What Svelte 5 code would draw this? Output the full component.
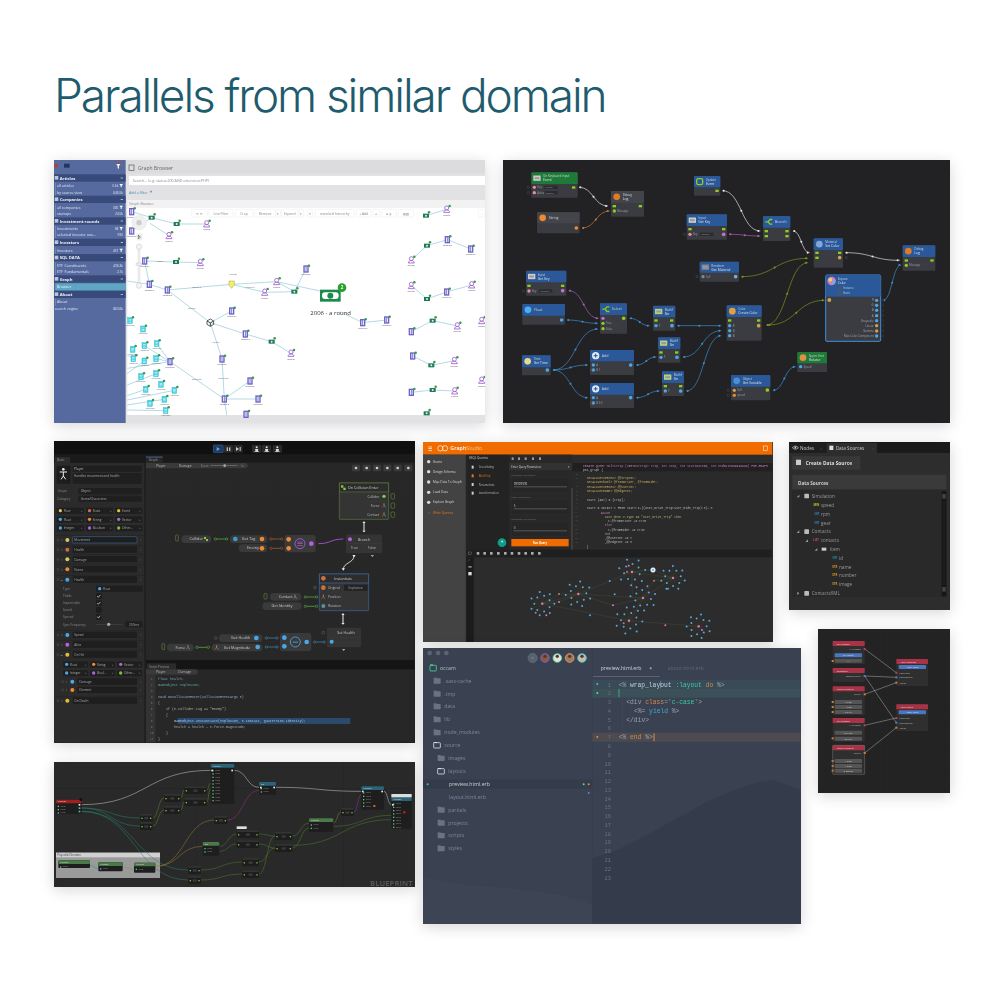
<script>
  // Every panel of the collage is a small drawing, described in units of 1/3 page pixel.
  const panels = [];
  let cur;
  const panel = (ox, oy, x0, y0, x1, y1, bg) => {
    cur = { left: ox + x0 / 3, top: oy + y0 / 3 - 160, w: (x1 - x0) / 3, h: (y1 - y0) / 3, vb: `${x0} ${y0} ${x1 - x0} ${y1 - y0}`, bg, items: [] };
    panels.push(cur);
  };
  const R = (x, y, w, h, f, o = {}) => cur.items.push({ k: 'r', x, y, w, h, f, ...o });
  const T = (x, y, s, size, f, o = {}) => cur.items.push({ k: 't', x, y, s, size, f, a: 'start', cl: 'sans', ...o });
  const C = (x, y, r, f, o = {}) => cur.items.push({ k: 'c', x, y, r, f, ...o });
  const L = (d, st, sw = 2, o = {}) => cur.items.push({ k: 'p', d, st, sw, ...o });
  const F = (d, f, o = {}) => cur.items.push({ k: 'f', d, f, ...o });
  const bez = (a, b, c, d) => { const m = (a + c) / 2; return `M${a} ${b}C${m} ${b} ${m} ${d} ${c} ${d}`; };
  const line = (a, b, c, d) => `M${a} ${b}L${c} ${d}`;

  /* ---------- 1. Graph browser ---------- */
  panel(50, 155, 12, 15, 1305, 805, '#e2e2e4');
  R(12, 15, 1293, 40, '#dcdcde');
  R(12, 15, 215, 790, '#566a9f');
  R(14, 27, 10, 10, '#c0392b', { rx: 2 });
  R(42, 26, 17, 12, '#27355e');
  F('M196 24h18l-7 9v9l-4-3v-6z', '#f1f1f1');
  R(196, 24, 18, 3, '#c0392b');
  R(237, 30, 15, 17, 'none', { st: '#555', sw: 2 });
  T(264, 44, 'Graph Browser', 15, '#666');
  R(237, 63, 1068, 27, '#fff');
  T(248, 81, 'Search... (e.g. status:200 AND extension:PHP)', 11, '#8a8a8a');
  T(237, 116, 'Add a filter', 11, '#4a8db3');
  T(299, 116, '+', 13, '#2a7fb0', { w: 700 });
  [
    ['Articles', 58], ['Companies', 122], ['Investment rounds', 187], ['Investors', 251],
    ['SQL DATA', 297], ['Graph', 361], ['About', 407]
  ].forEach(([s, y]) => {
    R(12, y, 215, 22, '#384a7a');
    R(14, y + 5, 11, 11, '#b9c3dc');
    T(29, y + 16, s, 12.5, '#eef1f8', { w: 700 });
    R(212, y + 10, 7, 2, '#eee');
  });
  [
    ['all articles', '5.6k', 92, 1], ['by source view', '646.5k', 112], ['all companies', '330', 157, 1], ['startups', '24.5k', 175],
    ['Investments', '38', 221, 1], ['selected investor ana...', '590', 240], ['Investors', '457', 286, 1],
    ['ETF_Constituents', '436.3k', 331], ['ETF_Fundamentals', '2.1k', 350], ['About', '', 441], ['search engine', '863.6k', 462]
  ].forEach(([s, n, y, fl]) => {
    T(y === 462 ? 14 : 21, y + 4, s, 11, '#dfe5f3');
    T(fl ? 205 : 219, y + 4, n, 9.5, '#dfe5f3', { a: 'end' });
    if (fl) F(`M208 ${y - 5}h11l-4 5v5h-3v-5z`, '#fff');
    if (y !== 462) R(16, y - 9, 1.5, 19, '#8c9cc7');
  });
  R(16, 385, 211, 21, '#5ea6c4');
  T(21, 400, 'Browser', 11, '#e9f4f9');
  R(232, 135, 1073, 23, '#f2f2f3');
  T(238, 149, 'Graph Browser', 10.5, '#888');
  R(232, 158, 1073, 622, '#fff');
  const dBuild = [[245,170],[245,228],[284,318],[298,388],[352,405],[768,342],[545,468],[586,537],[516,612],[360,620],[523,732],[600,678],[624,732],[938,503],[1010,495],[1192,254],[1262,282],[1190,411],[1084,530],[1088,603],[1084,712],[588,778]];
  const dPers = [[470,207],[357,242],[451,323],[680,380],[644,412],[723,595],[1084,315],[1084,392],[1265,390],[1222,513],[1213,617],[1214,708],[1295,497],[1295,676],[1190,163]];
  const dMoney = [[305,188],[380,207],[378,321],[733,410],[665,560],[1131,272],[1131,432],[1148,497],[1144,631],[1148,705],[1128,182],[1130,775]];
  const dDoc = [[240,497],[279,522],[320,566],[283,572],[248,583],[250,611],[283,618],[318,611],[273,665],[318,656],[287,703],[333,688],[373,706],[343,733],[300,745],[347,767]];
  [
    [232,378,298,388],[284,318,298,388],[284,318,378,321],[378,321,451,323],[352,405,545,388],[298,388,352,405],[545,388,680,380],[545,388,644,412],[644,412,733,410],[680,380,810,408],[768,342,733,410],[733,410,680,380],[352,405,481,503],[481,503,545,468],[481,503,586,537],[586,537,665,560],[665,560,723,595],[481,503,516,612],[516,612,523,732],[360,620,523,732],[523,732,600,678],[523,732,624,732],[523,732,530,780],[938,503,1010,495],[870,470,938,503],[245,170,305,188],[245,228,305,188],[305,188,380,207],[380,207,470,207],[357,242,300,205],[1084,315,1131,272],[1131,272,1192,254],[1192,254,1262,282],[1084,392,1131,432],[1131,432,1190,411],[1190,411,1265,390],[1084,530,1148,497],[1148,497,1222,513],[1088,603,1144,631],[1144,631,1213,617],[1084,712,1148,705],[1148,705,1214,708],[1128,182,1190,163],
    [232,640,360,620],[232,655,283,618],[232,600,250,611],[232,690,318,656],[232,722,287,703],[232,735,373,706],[232,750,343,733],[232,765,347,767],[283,572,360,620],[320,566,360,620],[318,611,360,620]
  ].forEach(([a, b, c, d]) => L(line(a, b, c, d), '#74b9d0', 1.6));
  const badge = (x, y) => C(x + 9, y - 10, 3.8, '#3a9a4a');
  dBuild.forEach(([x, y]) => { R(x - 8, y - 11, 16, 22, '#6f64c8'); R(x - 4, y - 7, 3, 14, '#e6e3f8'); R(x + 1, y - 7, 3, 14, '#e6e3f8'); badge(x, y); });
  dPers.forEach(([x, y]) => { C(x, y - 4, 6, '#fff', { st: '#a05fd0', sw: 2.6 }); L(`M${x - 9} ${y + 9}c1-10 17-10 18 0z`, '#a05fd0', 2.6); badge(x, y); });
  dMoney.forEach(([x, y]) => { R(x - 9, y - 6, 18, 12, '#1d7a58'); C(x, y, 3, '#e4f3ec'); badge(x, y); });
  dDoc.forEach(([x, y]) => { R(x - 7, y - 9, 14, 18, '#48cfdf', { st: '#35c4d6', sw: 1.5 }); R(x - 4, y - 4, 8, 1.5, '#fff'); R(x - 4, y, 8, 1.5, '#fff'); R(x - 4, y + 4, 8, 1.5, '#fff'); badge(x, y); });
  dBuild.slice(0, 18).forEach(([x, y]) => T(x, y + 19, 'Corporate', 6, '#555', { a: 'middle' }));
  dPers.forEach(([x, y]) => T(x, y + 19, 'Investor', 6, '#555', { a: 'middle' }));
  dDoc.forEach(([x, y]) => T(x, y + 16, 'Article title', 5.5, '#555', { a: 'middle' }));
  [[440,398,'located in'],[600,398,'funded by'],[425,462,'category'],[498,565,'partner'],[520,672,'acquisition'],[440,674,'acquisition'],[330,320,'invests'],[550,360,'investor']].forEach(([x, y, s]) => T(x, y, s, 6, '#666', { a: 'middle' }));
  F('M537 378h16v12l-8 10-8-10z', '#f5ee70');
  L('M537 378h16v12l-8 10-8-10z', '#a5a520', 1.5);
  L('M471 498l10-6 10 6v10l-10 6-10-6zM471 498l10 6 10-6M481 504v10', '#222', 2.2);
  R(810, 404, 62, 36, '#1c8a4c'); R(816, 412, 50, 20, '#fff', { rx: 9 }); C(841, 422, 9, '#1c8a4c');
  C(876, 398, 13, '#2f9e32'); T(876, 403, '2', 13, '#fff', { a: 'middle', w: 700 });
  T(842, 479, '2006 - a round', 18, '#333', { a: 'middle' });
  [[425,47,'⟲ ⟳'],[477,72,'Live Filter'],[556,52,'Crop'],[614,62,'Remove'],[678,14,'▾'],[695,48,'Expand'],[747,14,'▾'],[772,16,'≡'],[795,118,'standard  hierarchy'],[919,44,'+ Add'],[969,20,'◂'],[995,44,'● ◎'],[1045,46,'▤ ▧'],[1285,20,'→']].forEach(([x, w, s]) => {
    R(x, 163, w, 23, '#fff', { st: '#e0e0e0', sw: 1, rx: 3 });
    T(x + w / 2, 179, s, 10, '#888', { a: 'middle' });
  });
  C(267, 203, 22, '#f0f0f0', { st: '#ddd', sw: 1 }); C(267, 203, 8, '#ccc');
  R(260, 236, 17, 20, '#eee'); L('M265 240v11l6-4z', '#222', 1.5);
  R(264, 278, 6, 105, '#f0f0f0', { st: '#ccc', sw: 1 });
  C(267, 275, 8, '#f4f4f4', { st: '#aaa', sw: 1 }); C(267, 392, 8, '#f4f4f4', { st: '#aaa', sw: 1 });
  R(258, 324, 18, 7, '#eee', { st: '#bbb', sw: 1 });

  /* ---------- 2. Visual scripting, blue nodes ---------- */
  panel(500, 155, 10, 15, 1350, 805, '#222224');
  const hBlue = '#2a5898', hGreen = '#1f7a38', hGray = '#43454a';
  const wires = [
    ['#e8e8e8',238,97,325,153],['#c97b3d',247,219,330,168],['#e8e8e8',668,107,782,228],['#b060b8',688,238,782,243],['#e8e8e8',880,228,930,293],
    ['#7c9a20',725,365,925,310],['#7c9a20',800,510,925,323],['#7c9a20',805,510,975,436],['#e8e8e8',1037,293,1200,316],['#3f8fcf',1150,436,1205,330],
    ['#b060b8',207,407,297,490],['#3f8fcf',202,495,295,505],['#3f8fcf',160,645,295,522],['#3f8fcf',390,490,450,512],['#3f8fcf',533,512,665,512],
    ['#3f8fcf',160,645,265,630],['#3f8fcf',160,645,265,728],['#3f8fcf',410,630,470,606],['#3f8fcf',410,728,480,708],['#3f8fcf',550,606,665,527],
    ['#3f8fcf',560,708,665,542],['#3f8fcf',820,706,888,635]
  ];
  wires.forEach(([s, a, b, c, d]) => {
    L(bez(a, b, c, d), s, 2);
    C((a + c) / 2, (b + d) / 2, 3, s); C(a + 4, b, 3, s); C(c - 6, d, 3, s);
  });
  [
    [95,52,139,76,35,hGreen,'On Keyboard Input','Event','#ccc','k'],[334,108,99,77,35,hGray,'Debug','Log','#e07b20','c'],[112,172,128,63,33,hGray,'String','','#f08a30','c'],
    [583,63,79,59,34,hBlue,'Update','Event','#8ecc20','l'],[561,178,121,76,35,hBlue,'Input','Get Key','#ccc','k'],[790,183,82,75,35,hBlue,'Branch','','#8ecc20','b'],
    [942,250,88,88,35,hBlue,'Material','Set Color','#7fa8d8','c'],[1209,271,98,76,35,hBlue,'Debug','Log','#e07b20','c'],[600,320,118,60,33,hBlue,'Renderer','Get Material','#888','k'],
    [79,347,121,75,35,hBlue,'Input','Get Key','#ccc','k'],[68,447,128,62,35,hBlue,'Float','','#4ab0f0','c'],[301,445,81,91,35,hBlue,'Select','','#8ecc20','b'],
    [460,452,67,75,35,hBlue,'Mathf','Sin','#b8d080','k'],[681,451,105,106,35,hBlue,'Color','Create Color','#e0a040','c'],[475,547,67,76,35,hBlue,'Mathf','Sin','#b8d080','k'],
    [271,585,132,75,34,hBlue,'Add','','#bde','p'],[67,601,86,60,36,hBlue,'Time','Get Time','#e8d890','c'],[271,684,132,75,35,hBlue,'Add','','#bde','p'],
    [487,649,66,74,35,hBlue,'Mathf','Sin','#b8d080','k'],[694,660,118,76,35,hBlue,'Object','Get Variable','#4a90d0','c'],[893,591,89,60,34,hGreen,'Super Unit','Rotator','#e09040','c']
  ].forEach(([x, y, w, h, hh, col, t1, t2, ic, kind]) => {
    R(x, y, w, h, '#3a3c41', { rx: 3 });
    R(x, y, w, hh, col, { rx: 3 });
    const cy = y + hh / 2, cx = x + 17;
    if (kind === 'k') { R(cx - 11, cy - 8, 22, 16, ic); R(cx - 7, cy - 3, 14, 6, '#999'); }
    else if (kind === 'l') { R(cx - 9, cy - 9, 18, 18, 'none', { st: ic, sw: 4, rx: 5 }); }
    else if (kind === 'b') { L(`M${cx - 10} ${cy}h8M${cx - 2} ${cy}l6-7h7M${cx - 2} ${cy}l6 7h7`, ic, 4); }
    else if (kind === 'p') { C(cx, cy, 11, '#dfeaf8'); R(cx - 6, cy - 1.5, 12, 3, col); R(cx - 1.5, cy - 6, 3, 12, col); }
    else C(cx, cy, 10, ic);
    T(x + 35, t2 ? y + 15 : y + 21, t1, t2 ? 9 : 11, '#c8d4e4');
    if (t2) T(x + 35, y + 27, t2, 10, '#d8e2ee');
  });
  R(978, 360, 165, 199, '#3a3c41', { rx: 4, st: '#3f8fe0', sw: 3 });
  R(978, 360, 165, 65, hBlue, { rx: 4 });
  C(996, 378, 13, '#d07ac8'); C(992, 374, 6, '#f0d060'); C(1001, 382, 5, '#50c0e0');
  T(1014, 374, 'Expose', 9, '#c8d4e4'); T(1014, 387, 'Color', 10, '#d8e2ee');
  T(1030, 402, 'Instance', 8.5, '#b8c4d4'); T(1030, 418, 'Static', 8.5, '#b8c4d4');
  R(1016, 395, 9, 9, '#555'); R(1016, 411, 9, 9, '#555');
  [['R',436],['G',451],['B',466],['A',482],['Grayscale',497],['Linear',512],['Gamma',528],['Max Color Component',543]].forEach(([s, y], i) => {
    T(1122, y + 3, s, 8.5, '#a0a4aa', { a: 'end' });
    C(1131, y, 5, i === 5 || i === 6 ? '#d0a050' : '#4aa8e8');
    C(1149, y, 3.5, '#222', { st: '#555', sw: 1 });
  });
  C(989, 435, 6, '#d0a050');
  [[104,97,'#e88aa0','Key','"Right"'],[104,113,'#e88aa0','Action','"Down"'],[571,238,'#e88aa0','Key','"Space"'],[88,408,'#e88aa0','Key','"Cancel"'],[310,490,'#c070d0','',''],[310,505,'#8ecc20','True',''],[310,521,'#8ecc20','False',''],[344,168,'#8ecc20','Message',''],[1220,331,'#8ecc20','Message',''],[469,512,'#4aa8e8','F',''],[484,607,'#4aa8e8','F',''],[497,708,'#4aa8e8','F',''],[690,512,'#4aa8e8','R',''],[690,527,'#4aa8e8','G',''],[690,542,'#4aa8e8','B',''],[281,630,'#4aa8e8','A',''],[281,645,'#4aa8e8','B  1',''],[281,728,'#4aa8e8','A',''],[281,744,'#4aa8e8','B  0.5',''],[704,706,'#d0a050','Self',''],[704,721,'#f08a30','speed',''],[903,635,'#4aa8e8','Speed',''],[610,365,'#888','Self','']].forEach(([x, y, c, s, v]) => {
    C(x, y, 5, c);
    if (s) T(x + 9, y + 3, s, 8, '#a0a4aa');
    if (v) { R(x + 30, y - 5, 40, 10, '#2a2b2e'); T(x + 33, y + 3, v, 7.5, '#999'); }
  });
  [[186,495,'#4aa8e8'],[372,490,'#8ecc20'],[230,219,'#f08a30'],[143,645,'#4aa8e8'],[393,630,'#4aa8e8'],[393,728,'#4aa8e8'],[517,512,'#4aa8e8'],[532,607,'#4aa8e8'],[543,708,'#4aa8e8'],[777,512,'#d0a050'],[672,238,'#c070d0'],[189,407,'#c070d0'],[708,365,'#7fa8d8'],[803,705,'#8ecc20'],[1020,308,'#d0a050']].forEach(([x, y, c]) => C(x, y, 5.5, c));
  [[222,97],[422,153],[652,107],[672,222],[862,228],[862,243],[1020,293],[1297,316],[189,392],[516,496],[531,592],[543,693],[777,496],[344,153],[571,222],[88,392],[469,496],[484,592],[497,693],[690,496],[800,228],[800,243],[952,293],[952,308],[1220,316]].forEach(([x, y]) => R(x - 5, y - 3, 10, 7, '#8ecc20'));
  [[86,97],[86,113],[554,238],[71,408],[275,645],[275,744],[686,706],[686,721],[592,365],[1040,308]].forEach(([x, y]) => C(x, y, 3.5, 'none', { st: '#666', sw: 1 }));

  /* ---------- 3. Player graph ---------- */
  panel(50, 438, 12, 10, 1095, 915, '#1f1f1f');
  R(12, 10, 1083, 40, '#101010');
  R(490, 22, 30, 23, '#1f3a5e', { st: '#3a6fa8', sw: 1.5, rx: 3 }); F('M500 28l10 6-10 6z', '#5aa8e8');
  R(522, 22, 27, 23, '#2a2a2a', { rx: 3 }); R(530, 29, 4, 11, '#bbb'); R(537, 29, 4, 11, '#bbb');
  R(551, 22, 27, 23, '#2a2a2a', { rx: 3 }); F('M558 28l9 6-9 6z', '#ccc'); R(569, 28, 3, 12, '#ccc');
  [620, 650, 682].forEach((x) => { R(x - 14, 22, 28, 23, '#2a2a2a', { rx: 3 }); C(x, 29, 3, '#ddd'); F(`M${x - 5} 34h10l-2 8h-6z`, '#ddd'); R(x - 7, 41, 14, 2, '#ddd'); });
  R(12, 50, 1083, 25, '#1a1a1a');
  R(15, 58, 45, 18, '#2c2c2c'); T(22, 71, 'Basic', 9, '#999');
  R(12, 76, 271, 839, '#2b2b2b');
  R(20, 84, 42, 54, '#1d1d1d', { rx: 3 });
  C(40, 95, 4, '#eee'); L('M29 103h22M40 103v12M40 115l-7 10M40 115l7 10', '#eee', 3);
  R(68, 84, 207, 18, '#1f1f1f', { rx: 3 }); T(72, 97, 'Player', 10, '#bbb');
  R(68, 106, 207, 32, '#1f1f1f', { rx: 3 }); T(72, 119, 'Handles movement and health', 9.5, '#aaa');
  T(24, 164, 'Scope', 9.5, '#888'); R(85, 151, 190, 19, '#1f1f1f', { rx: 3 }); T(92, 164, 'Object', 10, '#aaa');
  T(22, 186, 'Category', 9.5, '#888'); R(85, 174, 190, 18, '#1f1f1f', { rx: 3 }); T(92, 186, 'Game/Characters', 9.5, '#aaa');
  const chip = (x, y, w, s, c) => { R(x, y, w, 21, '#1f1f1f', { rx: 4, st: '#3a3a3a', sw: 1 }); C(x + 12, y + 10, 5, c); T(x + 22, y + 14, s, 9.5, '#aaa'); T(x + w - 8, y + 14, '+', 9.5, '#888', { a: 'middle' }); };
  [['Flow','#d8c860'],['State','#c87040'],['Event','#e0c030'],['Float','#4aa8e8'],['String','#f08a30'],['Vector','#a870c0'],['Integer','#4aa8e8'],['Boolean','#b060e0'],['Other...','#80c030']].forEach(([s, c], i) =>
    chip(19 + (i % 3) * 87.5, 209 + Math.floor(i / 3) * 26, 84, s, c));
  [
    [307,'Movement','#d8c860',1],[336,'Health','#c87040'],[365,'Damage','#d8c860'],[395,'Name','#f08a30'],[426,'Health','#4aa8e8'],[592,'Speed','#4aa8e8'],[621,'Alive','#b060e0'],[651,'On Hit','#e0c030'],[789,'On Death','#e0c030']
  ].forEach(([y, s, c, on], i) => {
    R(12, y - 14, 271, 0.8, '#1c1c1c');
    R(20, y - 4, 8, 8, '#3a3a3a');
    T(36, y + 4, i === 4 || i === 7 ? '⌄' : '›', 11, '#bbb', { a: 'middle' });
    C(52, y, 6, c);
    R(68, y - 10, 193, 19, '#1e1e1e', { rx: 3, st: on ? '#3f7ab0' : 'none', sw: 1.5 });
    T(73, y + 4, s, 9.5, '#aaa');
    T(271, y + 4, '×', 10, '#555', { a: 'middle' });
  });
  [['Type',453],['Public',475],['Inspectable',496],['Saved',516],['Synced',537]].forEach(([s, y], i) => {
    T(39, y + 3, s, 9.5, '#888');
    if (i === 0) { R(138, y - 9, 140, 18, '#1f1f1f', { rx: 3 }); C(149, y, 5, '#4aa8e8'); T(159, y + 4, 'Float', 9.5, '#aaa'); }
    else { R(138, y - 8, 17, 17, '#1d1d1d', { rx: 3 }); if (i !== 3) L(`M142 ${y}l3 4 6-7`, '#eee', 2); }
  });
  T(39, 564, 'Sync Frequency', 9.5, '#888');
  R(138, 559, 80, 2, '#444'); C(176, 560, 5, '#aaa');
  R(226, 551, 52, 18, '#1f1f1f', { rx: 3 }); T(252, 564, '250ms', 9.5, '#aaa', { a: 'middle' });
  [['Float','#4aa8e8',680,38],['String','#f08a30',680,119],['Vector','#a870c0',680,200],['Integer','#4aa8e8',706,38],['Bool...','#b060e0',706,119],['Other...','#80c030',706,200]].forEach(([s, c, y, x]) => chip(x, y - 10, 77, s, c));
  [[732,'Damage','#4aa8e8'],[757,'Element','#f08a30']].forEach(([y, s, c]) => {
    R(34, y - 4, 8, 8, '#3a3a3a'); T(50, y + 4, '›', 11, '#bbb', { a: 'middle' }); C(67, y, 6, c);
    R(82, y - 10, 179, 19, '#1e1e1e', { rx: 3 }); T(88, y + 4, s, 9.5, '#aaa'); T(271, y + 4, '×', 10, '#555', { a: 'middle' });
  });
  R(288, 75, 805, 593, '#272727');
  for (let x = 300; x < 1093; x += 30) R(x, 92, 1, 576, '#2c2c2c');
  for (let y = 100; y < 668; y += 30) R(288, y, 805, 1, '#2c2c2c');
  R(288, 58, 50, 18, '#272727'); R(288, 57, 50, 2, '#4a8ed0'); T(297, 71, 'Graph', 9, '#999');
  F('M288 76h300l7 8-7 8H288z', '#3a3a3a');
  T(318, 88, 'Player', 10, '#bbb'); T(386, 88, 'Damage', 10, '#bbb');
  T(452, 88, 'Zoom', 8.5, '#888'); R(482, 83, 80, 2, '#777'); C(524, 84, 4, '#aaa'); T(572, 88, '1x', 8.5, '#888');
  [918, 950, 981, 1012, 1043, 1075].forEach((x) => { R(x - 12, 81, 24, 20, '#3a3a3a', { rx: 3 }); C(x, 91, 4, '#ccc'); });
  // code graph
  const pin = (x, y, c) => C(x, y, 6, c);
  const axes = (x, y) => { L(`M${x} ${y}v-7`, '#e0c030', 2); L(`M${x} ${y}l-6 5`, '#e05040', 2); L(`M${x} ${y}l6 5`, '#4aa8e8', 2); };
  const link = (a, b, c, col = '#5ec040') => { L(`M${a} ${b}H${c}`, col, 2); C(a + 4, b, 3.5, '#272727', { st: col, sw: 1.5 }); C(c - 4, b, 3.5, '#272727', { st: col, sw: 1.5 }); };
  const pill = (x, y, w, h, s, a = 'middle') => { R(x, y, w, h, '#3a3a3a', { rx: h / 2 }); T(x + w / 2, y + h / 2 + 4, s, 11.5, '#ccc', { a }); };
  const box = (x, y, w, h, st) => { R(x, y, w, h, '#343434', { st, sw: 2, rx: 2 }); };
  box(868, 136, 148, 109, '#5a7a3a'); R(868, 136, 148, 27, '#2c2c2c', { st: '#5a7a3a', sw: 2 });
  T(894, 153, 'On Collision Enter', 11, '#ccc');
  R(873, 143, 7, 7, '#90c840'); R(880, 150, 7, 7, '#90c840');
  [['Collider',176,'#90c840'],['Force',204,'#c87040'],['Contact',231,'#c87040']].forEach(([s, y, c], i) => {
    R(868, y - 13, 148, 1, '#3d3d3d'); T(988, y + 4, s, 10, '#bbb', { a: 'end' });
    if (i) axes(1002, y); else C(1002, y, 5, c);
    R(1023, y - 8, 11, 16, 'none', { st: '#6fa040', sw: 1.5, rx: 3 });
  });
  L('M942 253v28', '#eee', 3); F('M937 256l5-5 5 5zM937 279l5 5 5-5z', '#eee');
  R(377, 292, 8, 18, 'none', { st: '#6fa040', sw: 1.5, rx: 2 });
  pill(394, 293, 90, 23, 'Collider'); R(462, 298, 6, 6, '#90c840'); R(468, 304, 6, 6, '#90c840');
  link(492, 304, 534);
  pill(540, 293, 112, 23, 'Get Tag'); C(556, 304, 7, '#3a9ad0'); C(636, 304, 7, '#f08a30');
  pill(566, 320, 86, 23, 'Enemy'); C(636, 332, 7, '#f08a30');
  link(659, 304, 699, '#a86a3a'); link(659, 332, 699, '#a86a3a');
  R(703, 292, 94, 52, '#3a3a3a', { rx: 8 });
  C(716, 305, 7, '#f08a30'); C(716, 332, 7, '#f08a30');
  C(750, 318, 15, 'none', { st: '#b060e0', sw: 2.5 }); R(742, 312, 16, 2, '#b060e0'); R(742, 317, 16, 2, '#b060e0'); R(742, 322, 16, 2, '#b060e0');
  C(784, 318, 7, '#b060e0');
  L(bez(805, 318, 880, 304), '#9a50c0', 3);
  box(889, 292, 106, 53, '#3a3a3a'); pin(900, 305, '#b060e0'); T(942, 309, 'Branch', 11, '#ccc', { a: 'middle' });
  R(889, 318, 106, 1, '#444'); R(940, 318, 1, 27, '#444');
  T(913, 335, 'True', 10, '#bbb', { a: 'middle' }); T(966, 335, 'False', 10, '#bbb', { a: 'middle' });
  F('M962 352l5 6 5-6z', '#aaa');
  L('M912 355C912 375 880 375 880 395', '#eee', 2.5); F('M907 352h10l-5 7zM875 392h10l-5 7z', '#eee');
  box(808, 409, 148, 110, '#3a6ba0');
  R(808, 409, 148, 27, '#2c2c2c', { st: '#3a6ba0', sw: 2 });
  C(820, 422, 7, '#d07040'); T(880, 426, 'Instantiate', 11, '#ccc', { a: 'middle' });
  C(820, 450, 7, '#d07040'); T(834, 454, 'Original', 10, '#bbb'); R(882, 441, 70, 18, '#222', { rx: 2 }); T(917, 454, 'Explosion', 9.5, '#aaa', { a: 'middle' });
  axes(820, 478); T(834, 482, 'Position', 10, '#bbb');
  C(820, 505, 6, '#5a90a0'); T(834, 509, 'Rotation', 10, '#bbb');
  C(795, 450, 4, 'none', { st: '#888', sw: 1 });
  pill(660, 466, 94, 23, 'Contact'); axes(735, 478); pill(637, 494, 118, 23, 'Get Identity');
  R(642, 468, 9, 16, 'none', { st: '#6fa040', sw: 1.5, rx: 2 });
  link(762, 478, 804); link(762, 506, 804);
  L('M879 528v30', '#eee', 3); F('M874 532l5-5 5 5zM874 556l5 5 5-5z', '#eee');
  box(832, 572, 100, 55, '#3a3a3a'); T(888, 589, 'Set Health', 11, '#ccc', { a: 'middle' }); R(832, 598, 100, 1, '#444'); pin(845, 612, '#4aa8e8'); F('M876 634l5 6 5-6z', '#aaa');
  C(820, 585, 4, 'none', { st: '#888', sw: 1 }); C(497, 601, 4, 'none', { st: '#888', sw: 1 });
  pill(507, 590, 130, 23, 'Get Health'); C(619, 601, 7, '#4aa8e8');
  pill(485, 618, 152, 23, 'Get Magnitude'); C(623, 628, 7, '#4aa8e8'); axes(500, 630);
  pill(351, 618, 80, 23, 'Force'); axes(414, 630);
  R(336, 618, 8, 18, 'none', { st: '#6fa040', sw: 1.5, rx: 2 });
  link(437, 629, 479); link(645, 601, 685, '#4a90c0'); link(645, 628, 685, '#4a90c0'); link(790, 613, 826, '#4a90c0');
  R(690, 586, 94, 54, '#3a3a3a', { rx: 8 }); C(703, 600, 7, '#4aa8e8'); C(703, 626, 7, '#4aa8e8');
  C(736, 613, 15, 'none', { st: '#4aa8e8', sw: 2.5 }); R(728, 612, 16, 2.5, '#4aa8e8'); C(770, 613, 7, '#4aa8e8');
  // script preview
  R(288, 668, 805, 30, '#151515');
  R(290, 677, 88, 18, '#2b2b2b'); T(298, 691, 'Script Preview', 9, '#999');
  R(288, 695, 805, 220, '#272727');
  F('M288 695h150l7 8-7 8H288z', '#3a3a3a'); T(318, 707, 'Player', 10, '#bbb'); T(385, 707, 'Damage', 10, '#bbb');
  R(288, 711, 28, 204, '#333');
  const codeL = [['float health;','#7c9ad0',724],['GameObject explosion;','#5ab0a0',742],['void OnCollisionEnter(CollisionEventArgs e)','#9ab0c8',778],['{','#aaa',796],['    if (e.collider.tag == "Enemy")','#a8b8a8',814],['    {','#aaa',832],['        GameObject.Instantiate(explosion, e.contact, Quaternion.identity);','#a8c8e0',850],['        health = health - e.force.magnitude;','#aaa',868],['    }','#aaa',886],['}','#aaa',904]];
  R(383, 841, 518, 18, '#2b4a6c');
  codeL.forEach(([s, c, y]) => T(324, y + 3, s, 10, c, { cl: 'mono', sp: 'preserve' }));
  [724, 742, 760, 778, 796, 814, 832, 850, 868, 886, 904].forEach((y, i) => T(305, y + 3, String(i + 1), 9, '#777', { a: 'middle', cl: 'mono' }));

  /* ---------- 4. GraphStudio ---------- */
  panel(420, 438, 10, 12, 1058, 612, '#2c2c2c');
  R(10, 12, 1048, 38, '#f06c00');
  R(26, 26, 11, 2, '#fff'); R(26, 31, 11, 2, '#fff'); R(26, 36, 11, 2, '#fff');
  C(62, 31, 8, 'none', { st: '#fff', sw: 2 }); C(76, 31, 8, 'none', { st: '#fff', sw: 2 });
  T(92, 36, 'Graph', 16, '#fff', { w: 600 }); T(140, 36, 'Studio', 16, '#f9c48c');
  R(1031, 24, 12, 13, 'none', { st: '#fff', sw: 1.5 });
  R(10, 50, 128, 562, '#434343');
  [['Home',71],['Design Schema',101],['Map Data To Graph',132],['Load Data',163],['Explore Graph',193]].forEach(([s, y]) => { T(40, y + 3, s, 9.5, '#d8d8d8'); C(27, y, 5, '#ddd'); });
  T(40, 227, 'Write Queries', 9.5, '#e8741a'); T(27, 227, '‹›', 9.5, '#e8741a', { a: 'middle' });
  R(140, 50, 128, 285, '#232323');
  T(147, 64, 'GSQL Queries', 9, '#ccc');
  [['Crosslisting',88],['MultiTrip',114],['Parametrize',140],['transformation',166]].forEach(([s, y], i) => { T(177, y + 3, s, 8.5, i === 1 ? '#e8741a' : '#bbb'); R(156, y - 5, 6, 9, i === 1 ? '#e8741a' : '#ccc'); });
  C(247, 314, 13, '#0f9d8a'); T(247, 319, '+', 14, '#fff', { a: 'middle' });
  R(268, 50, 190, 285, '#282828');
  [279, 298, 318, 340, 361].forEach((x) => R(x - 3, 58, 6, 8, '#999'));
  R(268, 75, 190, 22, '#323232'); T(275, 90, 'Enter Query Parameters', 8, '#ddd'); T(447, 90, '×', 9, '#ddd', { a: 'middle' });
  [['endDate: int number','99999999',110],['step: int number','5',176],['startDate: int number','0',242]].forEach(([s, v, y]) => {
    T(275, y + 3, s, 7.5, '#777');
    R(276, y + 8, 172, 46, '#262626', { st: '#333', sw: 1 });
    T(282, y + 31, v, 9, '#ccc');
    R(282, y + 36, 160, 1.5, '#888');
  });
  R(456, 150, 4, 185, '#666');
  R(275, 303, 172, 22, '#f06c00'); T(361, 318, 'Run Query', 8, '#fff', { a: 'middle', w: 700 });
  R(458, 75, 600, 260, '#2a2a2a');
  R(458, 75, 600, 25, '#202020');
  [
    ['CREATE QUERY MultiTrip (VERTEX<Trip> trip, int step, int startDate=0, int endDate=99999999) FOR GRAPH',85,'#c77dba',490],
    ['pos_graph {',96,'#bbb',490],['SetAccum<VERTEX> @@tripSet;',120,'#c8b060',501],['SetAccum<bool> @fromDriver, @fromRider;',133,'#c8b060',501],['SetAccum<VERTEX> @@userSet;',146,'#c8b060',501],['SetAccum<EDGE> @@edgeSet;',159,'#c8b060',501],
    ['Start (ANY) = {trip};',185,'#bbb',501],['Start = SELECT t FROM Start:s-((User_Drive_Trip:User_Ride_Trip):e)-:t',211,'#bbb',501],['ACCUM',224,'#c77dba',543],['case when e.type == "User_Drive_Trip" then',237,'#a8b878',555],['t.@fromDriver += true',249,'#bbb',565],['else',262,'#c77dba',555],['t.@fromRider += true',275,'#bbb',565],['end',288,'#c77dba',555],[',@@userSet += t',300,'#bbb',555],[',@@edgeSet += e',313,'#bbb',555],['}',326,'#bbb',501]
  ].forEach(([s, y, c, x]) => T(x, y + 3, s, 9.2, c, { cl: 'mono' }));
  for (let i = 1; i < 19; i++) T(474, 84 + i * 12.8, String(i), 6.5, '#666', { a: 'end', cl: 'mono' });
  R(140, 335, 918, 23, '#1f1f1f');
  [175, 195, 215, 236, 257, 277, 298, 318, 338, 359].forEach((x) => R(x - 4, 342, 8, 8, '#aaa', { rx: 1 }));
  R(140, 358, 22, 254, '#1b1b1b');
  R(146, 342, 10, 8, 'none', { st: '#999', sw: 1 });
  T(151, 370, '✓', 9, '#2fb5a0', { a: 'middle' }); R(146, 384, 10, 5, '#888'); R(146, 402, 10, 10, '#ddd');
  const clusters = [[368,497],[476,468],[637,402],[760,420],[670,480],[628,548],[837,565]];
  [[368,497,476,468],[476,468,637,402],[637,402,760,420],[637,402,638,470],[476,468,670,480],[670,480,760,420],[670,480,580,502],[580,502,476,468],[670,480,628,548],[368,497,628,548],[628,548,837,565],[637,402,700,396],[700,396,760,420],[703,428,670,480],[703,428,760,420],[368,497,418,468],[418,468,476,468],[368,497,418,492],[418,492,476,468]].forEach(([a, b, c, d]) => L(line(a, b, c, d), '#4c4e38', 1.2));
  clusters.forEach(([cx, cy], k) => {
    const n = 14;
    for (let i = 0; i < n; i++) {
      const an = (i / n) * Math.PI * 2 + k * 0.37;
      const rad = i % 2 ? 24 : 36 + (k % 3) * 2;
      const x = cx + Math.cos(an) * rad, y = cy + Math.sin(an) * rad;
      L(line(cx, cy, x, y), '#454430', 1);
      C(x, y, 3, '#55a8e0');
    }
    C(cx, cy, 3.5, '#d884c8');
  });
  [[418,468,'#c07a70'],[418,492,'#e070c8'],[570,429,'#55a8e0'],[585,469,'#55a8e0'],[580,502,'#e070c8'],[511,532,'#55a8e0'],[703,428,'#c07a70'],[737,562,'#e070c8'],[612,556,'#c07a70'],[627,383,'#e070c8'],[622,402,'#c07a70'],[847,576,'#e070c8'],[380,532,'#e070c8'],[348,524,'#c07a70'],[740,452,'#55a8e0']].forEach(([x, y, c]) => C(x, y, 3, c));
  C(700, 396, 7, '#dfefff', { st: '#fff', sw: 1.5 }); C(700, 396, 3, '#5aa8e0');

  /* ---------- 5. Data sources ---------- */
  panel(785, 438, 12, 12, 495, 517, '#2d2d2d');
  R(12, 12, 483, 33, '#1a1a1a');
  R(12, 15, 108, 30, '#1f1f1f'); R(124, 15, 152, 30, '#2d2d2d');
  L('M22 29c5-6 13-6 18 0-5 6-13 6-18 0z', '#ddd', 2); C(31, 29, 2.5, '#ddd');
  T(45, 35, 'Nodes', 14, '#ccc'); T(108, 35, '×', 12, '#555', { a: 'middle' });
  R(133, 23, 12, 13, '#ddd'); T(152, 35, 'Data Sources', 14, '#ccc'); T(265, 35, '×', 12, '#555', { a: 'middle' });
  R(22, 55, 204, 40, '#383838', { rx: 2 });
  R(33, 65, 15, 16, '#ccc'); T(62, 81, 'Create Data Source', 14.5, '#ddd', { w: 700 });
  R(22, 110, 462, 45, '#3a3a3a', { rx: 2 });
  T(39, 140, 'Data Sources', 14, '#ccc', { w: 700 });
  R(22, 155, 462, 322, '#292929');
  const tree = [
    [65, 174, 'Simulation', 'db', 40], [108, 201, 'speed', 'MIN', 0, '#c8b82a'], [108, 228, 'rpm', 'INT', 0, '#2a8ab8'], [108, 255, 'gear', 'INT', 0, '#2a8ab8'],
    [65, 281, 'Contacts', 'db', 40], [107, 308, 'contacts', 'LIST', 66, '#d0407a'], [135, 334, 'Item', 'item', 94], [162, 360, 'id', 'INT', 0, '#2a8ab8'],
    [162, 387, 'name', 'STR', 0, '#d89a20'], [162, 413, 'number', 'STR', 0, '#d89a20'], [162, 440, 'image', 'STR', 0, '#d89a20'], [65, 466, 'ContactsXML', 'db', 40]
  ];
  tree.forEach(([x, y, s, kind, ar, col]) => {
    if (ar) F(s === 'ContactsXML' ? `M${ar - 3} ${y - 5}l6 5-6 5z` : `M${ar + 3} ${y - 4}v8h-8z`, '#999');
    if (kind === 'db') R(x - 7, y - 7, 14, 14, '#bbb', { rx: 2 });
    else if (kind === 'item') R(x - 25, y - 5, 14, 9, '#ccc');
    else T(x - 5, y + 2, kind, 8.5, col, { a: 'end', w: 700 });
    T(kind === 'db' ? x + 15 : x, y + 5, s, 14, '#999');
  });
  R(470, 160, 14, 315, '#171717'); R(472, 168, 10, 14, '#444'); R(472, 447, 10, 14, '#444'); R(475, 190, 4, 250, '#222');

  /* ---------- 6. Logic nodes ---------- */
  panel(815, 625, 10, 12, 405, 505, '#232323');
  for (let x = 20; x < 405; x += 22) R(x, 12, 1, 493, '#292929');
  for (let y = 20; y < 505; y += 22) R(10, y, 395, 1, '#292929');
  const red = '#a93346';
  const bn = (x, y, w, h, t) => { R(x, y, w, h, '#2f2f2f', { rx: 2 }); R(x, y, w, 15, red, { rx: 2 }); T(x + 12, y + 11, t, 7, '#e8d8d8'); };
  const fld = (x, y, s, c = '#555', col = '#ccc') => { R(x, y, 82, 12, c, { rx: 2 }); T(x + 41, y + 9, s, 7, col, { a: 'middle' }); };
  [[150,72,245,143,'#c8c8c8'],[150,153,245,157,'#c8c8c8'],[150,208,245,173,'#c8c8c8'],[150,153,245,293,'#c8c8c8'],[150,301,245,279,'#c8c8c8'],[150,384,245,308,'#c8c8c8']].forEach(([a, b, c, d, s]) => L(line(a, b, c, d), s, 1.3));
  bn(54, 48, 96, 69, 'Key Pressed'); T(138, 74, 'W Pressed', 7, '#bbb', { a: 'end' }); fld(60, 85, 'Key Down', '#4a78c0', '#dde'); fld(60, 101, 'W');
  bn(54, 129, 96, 42, 'GetOwner'); T(138, 156, 'Owner Object', 7, '#bbb', { a: 'end' });
  bn(54, 184, 96, 86, 'Vector 3 Simple'); T(138, 211, 'Vector', 7, '#bbb', { a: 'end' }); [['X','0.00',225],['Y','0.00',240],['Z','0.40',255]].forEach(([a, b, y]) => { fld(60, y, a + '       ' + b); R(51, y + 3, 6, 6, '#d08030'); });
  bn(54, 279, 96, 71, 'Key Pressed'); T(138, 304, 'W Pressed', 7, '#bbb', { a: 'end' }); fld(60, 317, 'Key Tap'); fld(60, 335, 'SPACE'); R(51, 337, 6, 6, '#d08030');
  bn(54, 361, 96, 87, 'Vector 3 Simple'); T(138, 387, 'Vector', 7, '#bbb', { a: 'end' }); [['X','0.00',402],['Y','0.00',417],['Z','200.00',431]].forEach(([a, b, y]) => { fld(60, y, a + '       ' + b); R(51, y + 3, 6, 6, '#d08030'); });
  R(54, 361, 96, 87, 'none', { st: '#777', sw: 1.5, rx: 2 });
  bn(245, 102, 95, 81, 'Apply Location'); fld(252, 120, 'Apply Local', '#4a78c0', '#dde');
  bn(245, 238, 95, 80, 'Apply Force'); fld(252, 256, 'Apply Local', '#4a78c0', '#dde');
  [[143,'Condition','#c04040'],[157,'GameObject','#3a8ad0'],[173,'Vector','#d08030'],[279,'Condition','#c04040'],[293,'GameObject','#3a8ad0'],[308,'Vector','#d08030']].forEach(([y, s, c]) => { R(242, y - 3, 6, 6, c); T(254, y + 3, s, 7, '#bbb'); });
  [[150,72,'#c04040'],[150,153,'#3a8ad0'],[150,208,'#d08030'],[150,301,'#c04040'],[150,384,'#d08030'],[54,108,'#d08030']].forEach(([x, y, c]) => R(x - 3, y - 3, 6, 6, c));

  /* ---------- 7. Editor ---------- */
  panel(420, 645, 10, 10, 1143, 837, '#3a4251');
  F('M518 837V640c170-40 330-200 540-235l85 30v402z', '#343b4b');
  F('M10 837V700c200 40 350 20 508 80v57z', '#3d4555');
  R(517, 10, 1, 827, '#353c4a');
  [30, 55, 80].forEach((x) => C(x, 25, 7, '#5c6472'));
  C(339, 40, 14, '#59616e', { st: '#6b7380', sw: 1.5 }); C(339, 40, 4, '#6e7684');
  [[376,'#7a5af0','#8a5a3a'],[413,'#48d8a0','#e8e0d0'],[450,'#e8a060','#a07860'],[487,'#40c8d0','#c8b8a8']].forEach(([x, ring, c]) => { C(x, 40, 13, c, { st: ring, sw: 2.5 }); C(x, 35, 5, '#4a3a30'); });
  R(31, 62, 19, 17, 'none', { st: '#3ed29a', sw: 2.5, rx: 2 }); R(31, 59, 9, 4, '#3ed29a');
  T(61, 77, 'occam', 15.5, '#b8bfcc');
  const ftree = [[42, 109, '.sass-cache', 0], [42, 148, '.tmp', 0], [42, 186, 'data', 0], [42, 225, 'lib', 0], [42, 264, 'node_modules', 0], [42, 302, 'source', 1], [54, 341, 'images', 0], [54, 380, 'layouts', 1], [54, 496, 'partials', 0], [54, 535, 'projects', 0], [54, 573, 'scripts', 0], [54, 612, 'styles', 0]];
  ftree.forEach(([x, y, s, open]) => {
    if (open) { R(x, y - 8, 20, 16, 'none', { st: '#d8dce4', sw: 2.5, rx: 2 }); R(x, y - 10, 10, 3, '#d8dce4'); }
    else { R(x, y - 8, 21, 16, '#697382', { rx: 2 }); R(x, y - 10, 9, 4, '#697382'); }
    T(x + 32, y + 5, s, 15.5, '#7f8897');
  });
  R(10, 405, 508, 27, '#343b49');
  C(24, 419, 3, '#35c4d8');
  T(88, 425, 'preview.html.erb', 15.5, '#cdd2da');
  T(88, 463, 'layout.html.erb', 15.5, '#7f8897');
  C(492, 419, 3, '#4be0a0'); C(507, 419, 3, '#f08a40'); C(507, 445, 3, '#7a70f0');
  T(543, 77, 'preview.html.erb', 15.5, '#cdd2da'); C(693, 71, 3, '#aab');
  R(520, 94, 200, 2, '#6c7686');
  T(744, 77, 'about.html.erb', 15.5, '#5d6676');
  R(518, 106, 625, 26, '#3a4b58'); R(518, 132, 625, 27, '#3b5058');
  R(518, 264, 625, 27, '#4d4a50');
  R(722, 109, 2, 22, '#58a8e0'); R(597, 133, 2, 25, '#3ed29a'); R(701, 266, 4, 24, '#b87a50');
  C(533, 118, 3, '#35c4d8'); C(533, 145, 3, '#4be0a0'); C(533, 277, 3, '#f08a40');
  for (let i = 1; i <= 23; i++) T(574, 120 + (i - 1) * 26.3 + 6, String(i), 16, '#6a7282', { a: 'end', cl: 'mono' });
  const cw = 11.36;
  const code = [
    [597, 120, [['<%', '#9aa2b0'], [' wrap_layout', '#c8ced8'], [' :layout', '#3ec8a0'], [' do', '#d08a50'], [' %>', '#9aa2b0']]],
    [620, 173, [['<div', '#9aa2b0'], [' class', '#d08a50'], ['=', '#9aa2b0'], ["'c-case'", '#3ec8a0'], ['>', '#9aa2b0']]],
    [643, 199, [['<%=', '#9aa2b0'], [' yield', '#40a8d0'], [' %>', '#9aa2b0']]],
    [620, 225, [['</div>', '#9aa2b0']]],
    [597, 277, [['<%', '#9aa2b0'], [' end', '#d08a50'], [' %>', '#9aa2b0']]]
  ];
  code.forEach(([x, y, toks]) => {
    let cx = x;
    toks.forEach(([s, c]) => { T(cx, y + 6, s, 18.9, c, { cl: 'mono', sp: 'preserve' }); cx += s.length * cw; });
  });
  R(608, 160, 1, 105, '#4a5262'); R(631, 186, 1, 28, '#4a5262');

  /* ---------- 8. Blueprint ---------- */
  panel(50, 758, 12, 12, 1095, 387, '#292929');
  for (let x = 20; x < 1095; x += 25) R(x, 12, 1, 375, '#2d2d2d');
  for (let y = 20; y < 387; y += 25) R(12, y, 1083, 1, '#2d2d2d');
  R(12, 90, 1083, 1, '#212121'); R(440, 12, 1, 375, '#232323'); R(880, 12, 1, 375, '#232323');
  R(18, 284, 312, 76, '#b6b6b6', { op: 0.8 }); R(18, 284, 312, 14, '#d0d0d0');
  T(22, 294, 'Projectile Direction', 8, '#333');
  const bpw = [
    ['#a8a8a8',95,140,482,37,2],['#a8a8a8',553,37,627,88,2],['#a8a8a8',678,88,934,100,2],['#a8a8a8',1002,100,1024,140,2],
    ['#2a8470',95,150,270,180,1.5],['#2a8470',95,150,270,204,1.5],['#2a8470',95,160,415,336,1.5],['#2a8470',95,160,415,366,1.5],
    ['#5f8a2c',308,180,342,120,1.5],['#5f8a2c',308,204,342,156,1.5],['#5f8a2c',392,120,403,96,1.5],['#5f8a2c',392,156,403,132,1.5],['#5f8a2c',470,96,482,75,1.5],['#5f8a2c',470,132,482,90,1.5],
    ['#98803a',316,325,493,186,1.5],['#98803a',316,325,458,265,1.5],['#a030a0',532,186,627,97,1.5],
    ['#4f8030',508,265,560,228,1.5],['#4f8030',508,280,560,258,1.5],['#4f8030',453,336,577,312,1.5],['#4f8030',453,366,577,348,1.5],['#4f8030',627,228,675,234,1.5],['#4f8030',627,258,675,270,1.5],['#4f8030',627,312,675,270,1.5],['#4f8030',627,348,675,234,1.5],['#4f8030',727,234,777,195,1.5],['#4f8030',727,270,777,210,1.5],['#4f8030',850,205,1024,172,1.5],['#4f8030',727,262,1024,185,1.5],['#a030a0',912,162,934,110,1.5],['#98803a',850,195,873,162,1.5],
    ['#3080a0',120,322,145,332,1.4],['#98803a',218,328,252,334,1.4]
  ];
  bpw.forEach(([s, a, b, c, d, w]) => L(bez(a, b, c, d), s, w));
  [
    [18,125,77,43,'#a02020'],[482,18,71,119,'#2a6478'],[627,72,51,38,'#2a6478'],[934,85,68,70,'#2a6478'],[1024,118,61,94,'#2a6478'],[777,181,73,41,'#4a7a4a'],[458,252,50,41,'#4a7a4a'],
    [25,307,95,23,'#4a7a4a'],[145,313,73,27,'#4a7a4a'],[252,314,64,30,'#4a7a4a']
  ].forEach(([x, y, w, h, c]) => {
    R(x, y, w, h, '#1e1e1e', { rx: 3 });
    R(x, y, w, 11, c, { rx: 3 });
    T(x + 6, y + 8, w > 60 ? 'Function' : 'Get', 6, '#ddd');
    for (let k = 18; k < h - 4; k += 10) { R(x + 5, y + k, 4, 4, k % 20 < 10 ? '#80c040' : '#50c0c0'); T(x + 13, y + 3 + k, 'Value', 6, '#999'); }
  });
  [[270,168,38,22],[270,192,38,24],[342,108,50,24],[342,144,50,24],[403,85,67,23],[403,120,67,24],[493,174,39,24],[873,150,39,24],[560,217,67,23],[560,247,67,23],[675,222,52,24],[675,258,52,24],[577,300,50,25],[577,337,50,23],[415,324,38,24],[415,354,38,24]].forEach(([x, y, w, h]) => {
    R(x, y, w, h, '#1d1d1d', { rx: 3 }); R(x, y, w, 5, '#333', { rx: 2 });
    R(x + 4, y + h / 2, 4, 4, '#80c040'); R(x + w - 8, y + h / 2, 4, 4, '#80c040'); R(x + w / 2 - 6, y + h / 2 - 2, 12, 7, '#3a3a3a');
  });
  R(88, 120, 9, 9, '#111', { rx: 5 });
  [[88,140,'#eee'],[88,150,'#50c0c0'],[88,160,'#50c0c0'],[486,37,'#eee'],[546,37,'#eee'],[632,88,'#eee'],[672,88,'#eee'],[938,100,'#eee'],[996,100,'#eee'],[1028,140,'#eee']].forEach(([x, y, c]) => R(x - 2, y - 2, 5, 5, c));
  R(1024, 108, 61, 10, '#ddd'); R(560, 205, 30, 8, '#ddd');
  R(970, 141, 6, 6, '#e06020'); R(1060, 160, 6, 6, '#e02020');
  T(1088, 384, 'BLUEPRINT', 23, '#555', { a: 'end', w: 700 });
</script>

<div class="page">
  <h1>Parallels from similar domain</h1>
  <div class="collage">
    {#each panels as pn}
      <div class="panel" style="left:{pn.left}px;top:{pn.top}px;width:{pn.w}px;height:{pn.h}px;background:{pn.bg}">
        <svg viewBox={pn.vb} preserveAspectRatio="none">
          {#each pn.items as i}
            {#if i.k === 'r'}
              <rect x={i.x} y={i.y} width={i.w} height={i.h} fill={i.f} rx={i.rx} stroke={i.st} stroke-width={i.sw} opacity={i.op} />
            {:else if i.k === 't'}
              <text class={i.cl} x={i.x} y={i.y} font-size={i.size} fill={i.f} text-anchor={i.a} font-weight={i.w} xml:space={i.sp}>{i.s}</text>
            {:else if i.k === 'c'}
              <circle cx={i.x} cy={i.y} r={i.r} fill={i.f} stroke={i.st} stroke-width={i.sw} />
            {:else if i.k === 'f'}
              <path d={i.d} fill={i.f} />
            {:else}
              <path d={i.d} fill="none" stroke={i.st} stroke-width={i.sw} />
            {/if}
          {/each}
        </svg>
      </div>
    {/each}
  </div>
</div>

<style>
  :global(body) {
    margin: 0;
    background: #fff;
  }
  .page {
    width: 1004px;
    height: 990px;
    overflow: hidden;
  }
  h1 {
    margin: 0;
    height: 160px;
    padding: 67px 0 0 54px;
    box-sizing: border-box;
    font-family: Inter, "Liberation Sans", sans-serif;
    font-weight: 300;
    font-size: 46px;
    line-height: 56px;
    letter-spacing: -2.1px;
    color: #1f5b6e;
  }
  .collage {
    position: relative;
    height: 830px;
  }
  .panel {
    position: absolute;
    overflow: hidden;
    box-shadow: 0 3px 14px rgba(0, 0, 0, 0.16);
  }
  svg {
    display: block;
    width: 100%;
    height: 100%;
    filter: blur(0.55px);
  }
  .sans {
    font-family: "Open Sans", "Liberation Sans", sans-serif;
  }
  .mono {
    font-family: "Liberation Mono", monospace;
    white-space: pre;
  }
</style>
